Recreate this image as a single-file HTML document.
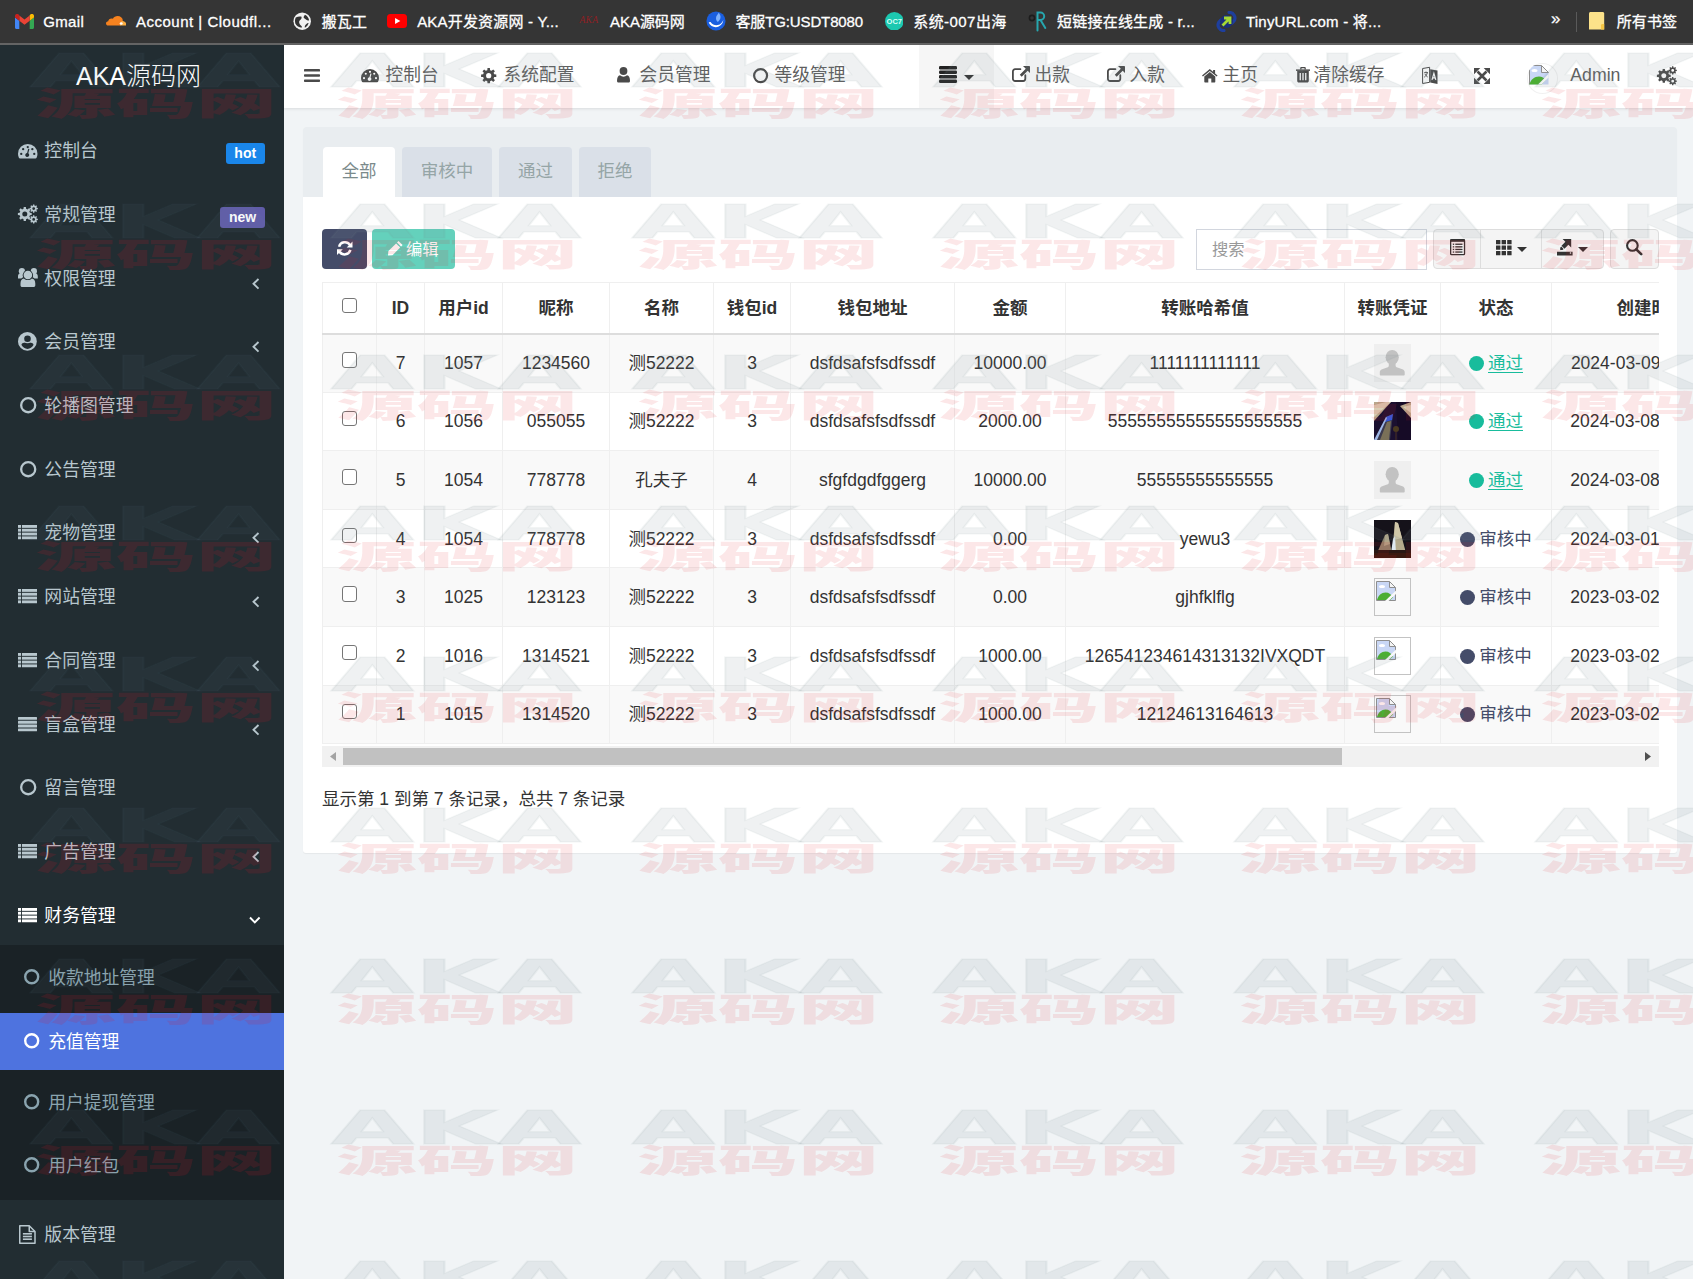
<!DOCTYPE html><html lang="zh-CN"><head><meta charset="utf-8"><title>AKA源码网</title>
<style>
*{box-sizing:border-box}
html,body{margin:0;padding:0}
body{width:1693px;height:1279px;overflow:hidden;position:relative;background:#f1f4f6;font-family:"Liberation Sans","Noto Sans CJK SC",sans-serif;font-size:17.5px;color:#333}
.abs{position:absolute}
#bm{left:0;top:0;width:1693px;height:45px;background:#353535;border-bottom:2px solid #646464;color:#f1f1f1;font-size:15px}
#bm .t{position:absolute;top:0;height:43px;line-height:43px;white-space:nowrap;color:#fff;-webkit-text-stroke:0.3px #fff}
#bm .i{position:absolute}
#side{left:0;top:45px;width:284px;height:1234px;background:#222d32;color:#b8c7ce}
#side .logo{position:absolute;left:0;top:0;width:277px;height:63px;line-height:62px;text-align:center;color:#fff;font-size:25px;font-weight:300}
#side .it{position:absolute;left:0;width:284px;height:64px}
#side .it .ic{position:absolute;left:18px}
#side .it .tx{position:absolute;left:44.3px;top:0;line-height:66px;white-space:nowrap;font-size:17.85px}
#side .badge{position:absolute;color:#fff;font-weight:bold;font-size:14px;line-height:20px;height:20.5px;border-radius:3px;text-align:center}
#sub{position:absolute;left:0;top:900px;width:284px;height:255px;background:#1a2226}
#sub .si{position:absolute;left:0;width:284px;height:57px;color:#8aa4af}
#sub .si .tx{position:absolute;left:48.2px;top:0;line-height:58px;white-space:nowrap;font-size:17.8px}
#sub .si.act{background:#4e73df;color:#fff}
#head{left:284px;top:45px;width:1409px;height:63px;background:#fff;box-shadow:0 1px 3px rgba(0,0,0,.10);color:#5f5f5f}
#head .t{position:absolute;top:0;line-height:60px;white-space:nowrap;font-size:17.7px}
#head .i{position:absolute}
#panel{left:303px;top:127px;width:1374px;height:726px;background:#fff;border-radius:3px;box-shadow:0 1px 1px rgba(0,0,0,.05)}
#phead{left:0;top:0;width:1374px;height:70px;background:#e9edf0;border-radius:3px 3px 0 0}
.tab{position:absolute;top:20px;height:50px;line-height:48px;text-align:center;color:#95a5a6;background:#dae0e8;border-radius:4px 4px 0 0;font-size:17.5px}
.tab.on{background:#fff;color:#7b8a8b}
.btn{position:absolute;border-radius:4px}
#tblwrap{left:19px;top:155px;width:1337px;height:464px;overflow:hidden}
table{border-collapse:collapse;table-layout:fixed;width:1429px;font-size:17.5px;color:#333}
th,td{line-height:20px;border:1px solid #efefef;text-align:center;vertical-align:middle;padding:0;white-space:nowrap;overflow:hidden}
th{height:51px;font-weight:bold;border-bottom:2px solid #ddd;color:#333;background:#fff}
td{height:58.62px}
tr.odd td{background:#f9f9f9}
.cb{display:inline-block;width:15.5px;height:15.5px;border:1.3px solid #767676;border-radius:3px;background:#fff;vertical-align:middle;position:relative;top:-4.5px}
.thumb{display:inline-block;width:37px;height:38px;vertical-align:middle;position:relative;overflow:hidden}
.dot{display:inline-block;width:15px;height:15px;border-radius:50%;vertical-align:middle;margin-right:4px;position:relative;top:-1px}
.ok{color:#18bc9c;text-decoration:underline;text-decoration-thickness:1px;text-underline-offset:2.5px}
.ok .dot{background:#18bc9c}
.wait{color:#444c69}
.wait .dot{background:#444c69}
</style></head><body>
<div id="bm" class="abs">
<div class="t" style="left:43.2px;letter-spacing:0.386px">Gmail</div>
<div class="t" style="left:136px;letter-spacing:0.499px">Account | Cloudfl...</div>
<div class="t" style="left:321.8px;letter-spacing:0.061px">搬瓦工</div>
<div class="t" style="left:417.2px;letter-spacing:0.179px">AKA开发资源网 - Y...</div>
<div class="t" style="left:610px;letter-spacing:-0.036px">AKA源码网</div>
<div class="t" style="left:735.5px;letter-spacing:-0.131px">客服TG:USDT8080</div>
<div class="t" style="left:913.2px;letter-spacing:0.446px">系统-007出海</div>
<div class="t" style="left:1057.1px;letter-spacing:0.206px">短链接在线生成 - r...</div>
<div class="t" style="left:1245.9px;letter-spacing:0.237px">TinyURL.com - 将...</div>
<div class="t" style="left:1616.8px;letter-spacing:0.046px">所有书签</div>
<svg class="i" style="left:15px;top:14px" width="19" height="15" viewBox="0 0 19 15"><path d="M0 2v11.500c0 .8.700 1.500 1.500 1.500H4.300V6.800L0 3.500z" fill="#4285f4"/><path d="M14.700 15h2.800c.8 0 1.500-.7 1.500-1.500V3.500l-4.300 3.300z" fill="#34a853"/><path d="M14.700 1.500v5.300L19 3.500V2c0-1.800-2-2.700-3.400-1.700z" fill="#fbbc04"/><path d="M4.300 6.800V1.500L9.500 5.400l5.200-3.900v5.300L9.500 10.700z" fill="#ea4335"/><path d="M0 2v1.500l4.300 3.300V1.500L3.400.3C2-.7 0 .2 0 2z" fill="#c5221f"/></svg>
<svg class="i" style="left:105.9px;top:15.8px" width="20.5" height="10" viewBox="0 0 22 12" preserveAspectRatio="none"><path d="M15.500 11.500H2.500C1 11.500 0 10.300 0 9c0-1.400 1-2.500 2.400-2.600C2.500 4.500 4 3 6 3c.5 0 1 .1 1.400.3C8.300 1.300 10.300 0 12.500 0c2.900 0 5.300 2.200 5.600 5l-2.600 6.500z" fill="#f6821f"/><path d="M17 6c.3 0 .6 0 .900.1 2.300.3 4.100 2.400 4.100 4.700 0 .3-.2.700-.5.700H15l1.200-3.500c.2-1 .5-2 .8-2z" fill="#fbad41"/><circle cx="16.300" cy="9" r="1.600" fill="#fff"/></svg>
<svg class="i" style="left:292.8px;top:11.8px" width="18.4" height="18.4" viewBox="0 0 20 20"><circle cx="10" cy="10" r="9.500" fill="#f1f1f1"/><path d="M3 6c2-1 4-1.500 6-1 1 1.500 0 3-1.500 4-1 1-1 2-0.500 3.500.500 1.500 2 2 3 4-3 1-6-1-7.500-4C2 10 2 8 3 6zM13 3c2 1 4 3 4.500 6-1 .5-2 .5-3-.5s-2-1-3-2.500c0-1 .5-2 1.500-3zM17 12c-.5 2-2 4-4 5-.5-1 0-2.500 1-3.500s2-1.500 3-1.500z" fill="#333"/></svg>
<svg class="i" style="left:387px;top:14.2px" width="20" height="14" viewBox="0 0 23 16" preserveAspectRatio="none"><rect width="23" height="16" rx="4" fill="#ff0000"/><path d="M9.300 4.500v7l6-3.500z" fill="#fff"/></svg>
<div class="i" style="left:579.5px;top:14px;width:22px;height:13px;font-family:Liberation Serif,serif;font-size:9.5px;line-height:13px;color:#8e1f24;font-style:italic;letter-spacing:0.3px">AKA</div>
<svg class="i" style="left:706px;top:11px" width="20" height="20" viewBox="0 0 22 22"><circle cx="11" cy="11" r="10.500" fill="#1a5fe0"/><path d="M3 13c2 4 7 6 11 4 3-1.500 5-4 5-7-1 3-3 5-6 5.500-3 .5-6-.5-8-3.500-1 0-2 .3-2 1z" fill="#fff"/><path d="M14 2c-1 2-3 3-3 6 0 2 1 3 2 4 1.500-1.500 3-3 3-5.500 0-1.500-1-3-2-4.500z" fill="#7fb2ff"/></svg>
<svg class="i" style="left:884.6px;top:11.6px" width="18.6" height="18.6" viewBox="0 0 21 21"><circle cx="10.500" cy="10.500" r="10.500" fill="#1cc8b0"/><text x="10.500" y="13.500" text-anchor="middle" font-family="Liberation Sans,sans-serif" font-size="8.500" font-weight="bold" fill="#d8fff8">OC7</text></svg>
<svg class="i" style="left:1028px;top:10px" width="20" height="24" viewBox="0 0 20 24"><path d="M9.500 20.500V2.500h3a3.700 3.700 0 0 1 0 7.400H9.500M12.500 10l4.800 8" fill="none" stroke="#27a6ad" stroke-width="2" stroke-linecap="round"/><circle cx="4" cy="8" r="2.600" fill="none" stroke="#1c1c1c" stroke-width="1.600"/></svg>
<svg class="i" style="left:1216px;top:11px" width="21" height="21" viewBox="0 0 21 21"><path d="M13 1.500a5.500 5.500 0 0 1 5 8.500l-2 2M8 19.500a5.500 5.500 0 0 1-5-8.500l2-2" fill="none" stroke="#1e3f9e" stroke-width="3.200" stroke-linecap="round"/><circle cx="10.500" cy="10.500" r="6.500" fill="#1b2f7a"/><path d="M6.500 14.500 13 8M8 7h6v6" fill="none" stroke="#a5d934" stroke-width="2.800"/></svg>
<div class="t" style="left:1551px;font-size:17px;line-height:38px">»</div>
<div class="i" style="left:1576px;top:12px;width:1px;height:20px;background:#5a5a5a"></div>
<svg class="i" style="left:1589.4px;top:12.300px" width="15.200" height="17.600" viewBox="0 0 15.200 17.600"><path d="M0 1.500C0 .7.700 0 1.500 0h12.200c.8 0 1.500.7 1.500 1.500v16.100H0z" fill="#fce28a"/><path d="M12 17.600v-4.300c0-.8.600-1.400 1.400-1.400h1.800v5.700z" fill="#f6c644"/></svg>
</div>
<div id="side" class="abs">
<div class="logo">AKA源码网</div>
<div class="it" style="top:73px;color:#b8c7ce"><div class="abs" style="left:17.8px;top:25.80px"><svg width="19.5" height="14.6" viewBox="0 0 19.5 14.6" style="display:block;overflow:visible;"><g transform="scale(1.0)"><path fill-rule="evenodd" fill="#b8c7ce" d="M9.75 0A9.75 9.75 0 0 0 0 9.75c0 1.400.300 2.700.900 3.900.200.500.600.850 1.100.850h15.500c.500 0 .900-.350 1.100-.850.600-1.200.900-2.500.900-3.900A9.750 9.750 0 0 0 9.750 0zM2.100 9.900a1.150 1.150 0 1 0 2.300 0a1.150 1.150 0 1 0-2.300 0z M4 5.200a1.150 1.150 0 1 0 2.300 0a1.150 1.150 0 1 0-2.300 0z M8.600 3.100a1.150 1.150 0 1 0 2.300 0a1.150 1.150 0 1 0-2.300 0z M13.200 5.200a1.150 1.150 0 1 0 2.300 0a1.150 1.150 0 1 0-2.300 0z M15.100 9.900a1.150 1.150 0 1 0 2.300 0a1.150 1.150 0 1 0-2.300 0zM11.400 5.100 10.300 9.300a2 2 0 1 1-1.200-.300l1.100-4.200z"/></g></svg></div><div class="tx">控制台</div>
<div class="badge" style="left:225.5px;top:25px;width:39.5px;background:#1a86ea">hot</div>
</div>
<div class="it" style="top:137px;color:#b8c7ce"><div class="abs" style="left:17.6px;top:23.40px"><svg width="20" height="18" viewBox="0 0 20 18" style="display:block;overflow:visible;"><path fill-rule="evenodd" d="M5.52 3.86 L5.70 2.09 L7.90 2.09 L8.08 3.86 L9.53 4.46 L10.91 3.34 L12.46 4.89 L11.34 6.27 L11.94 7.72 L13.71 7.90 L13.71 10.10 L11.94 10.28 L11.34 11.73 L12.46 13.11 L10.91 14.66 L9.53 13.54 L8.08 14.14 L7.90 15.91 L5.70 15.91 L5.52 14.14 L4.07 13.54 L2.69 14.66 L1.14 13.11 L2.26 11.73 L1.66 10.28 L-0.11 10.10 L-0.11 7.90 L1.66 7.72 L2.26 6.27 L1.14 4.89 L2.69 3.34 L4.07 4.46Z M4.30 9.00 a2.5 2.5 0 1 0 5.0 0 a2.5 2.5 0 1 0 -5.0 0Z M14.95 0.59 L15.04 -0.55 L16.36 -0.55 L16.45 0.59 L17.30 0.94 L18.17 0.20 L19.10 1.13 L18.36 2.00 L18.71 2.85 L19.85 2.94 L19.85 4.26 L18.71 4.35 L18.36 5.20 L19.10 6.07 L18.17 7.00 L17.30 6.26 L16.45 6.61 L16.36 7.75 L15.04 7.75 L14.95 6.61 L14.10 6.26 L13.23 7.00 L12.30 6.07 L13.04 5.20 L12.69 4.35 L11.55 4.26 L11.55 2.94 L12.69 2.85 L13.04 2.00 L12.30 1.13 L13.23 0.20 L14.10 0.94Z M14.30 3.60 a1.4 1.4 0 1 0 2.8 0 a1.4 1.4 0 1 0 -2.8 0Z M14.95 11.39 L15.04 10.25 L16.36 10.25 L16.45 11.39 L17.30 11.74 L18.17 11.00 L19.10 11.93 L18.36 12.80 L18.71 13.65 L19.85 13.74 L19.85 15.06 L18.71 15.15 L18.36 16.00 L19.10 16.87 L18.17 17.80 L17.30 17.06 L16.45 17.41 L16.36 18.55 L15.04 18.55 L14.95 17.41 L14.10 17.06 L13.23 17.80 L12.30 16.87 L13.04 16.00 L12.69 15.15 L11.55 15.06 L11.55 13.74 L12.69 13.65 L13.04 12.80 L12.30 11.93 L13.23 11.00 L14.10 11.74Z M14.30 14.40 a1.4 1.4 0 1 0 2.8 0 a1.4 1.4 0 1 0 -2.8 0Z" fill="#b8c7ce"/></svg></div><div class="tx">常规管理</div>
<div class="badge" style="left:220px;top:25px;width:45px;background:#605ca8">new</div>
</div>
<div class="it" style="top:201px;color:#b8c7ce"><div class="abs" style="left:17.8px;top:22.00px"><svg width="19.8" height="19" viewBox="0 0 19.8 19" style="display:block;overflow:visible;"><circle cx="3.900" cy="3.200" r="3.100" fill="#b8c7ce"/><circle cx="15.900" cy="3.200" r="3.100" fill="#b8c7ce"/><path d="M0 10.600V8.400c0-1.900 1-3 2.300-3.100.800.600 1.700.800 2.600.700-.300 1-.200 2.200.400 3.300-.800.300-1.500.800-2 1.300z" fill="#b8c7ce"/><path d="M19.800 10.600V8.400c0-1.900-1-3-2.300-3.100-.800.600-1.700.800-2.600.700.300 1 .200 2.200-.400 3.300.800.300 1.500.800 2 1.300z" fill="#b8c7ce"/><circle cx="9.900" cy="7" r="5.100" fill="#222d32"/><circle cx="9.900" cy="7" r="4.300" fill="#b8c7ce"/><path d="M4.400 19c-1.200 0-1.900-.700-1.900-1.800v-1.700c0-2.700 1.300-4.500 3.400-4.900 1.100 1 2.500 1.500 4 1.500s2.900-.500 4-1.500c2.100.400 3.400 2.200 3.400 4.900v1.700c0 1.100-.7 1.800-1.900 1.800z" fill="#b8c7ce"/></svg></div><div class="tx">权限管理</div>
<div class="abs" style="left:251.5px;top:31.7px"><svg width="8" height="11.6" viewBox="0 0 8 11.6" style="display:block;overflow:visible;"><path d="M6.500 1 1.500 5.800l5 4.800" fill="none" stroke="#b8c7ce" stroke-width="1.900"/></svg></div>
</div>
<div class="it" style="top:264px;color:#b8c7ce"><div class="abs" style="left:18px;top:23.00px"><svg width="18.8" height="18.8" viewBox="0 0 18.8 18.8" style="display:block;overflow:visible;"><circle cx="9.400" cy="9.400" r="9.400" fill="#b8c7ce"/><path d="M3.500 13.100c0-1.900 2.400-2.500 6-2.500s6 .600 6 2.500c-1.200 2.300-3.600 3.800-6 3.800s-4.800-1.500-6-3.800z" fill="#222d32"/><circle cx="9.500" cy="6.800" r="4.500" fill="#b8c7ce"/><circle cx="9.500" cy="6.800" r="3.300" fill="#222d32"/></svg></div><div class="tx">会员管理</div>
<div class="abs" style="left:251.5px;top:31.7px"><svg width="8" height="11.6" viewBox="0 0 8 11.6" style="display:block;overflow:visible;"><path d="M6.500 1 1.500 5.800l5 4.800" fill="none" stroke="#b8c7ce" stroke-width="1.900"/></svg></div>
</div>
<div class="it" style="top:328px;color:#b8c7ce"><div class="abs" style="left:19.5px;top:24.20px"><svg width="16.4" height="16.4" viewBox="0 0 16.4 16.4" style="display:block;overflow:visible;"><circle cx="8.2" cy="8.2" r="7.049999999999999" fill="none" stroke="#b8c7ce" stroke-width="2.3"/></svg></div><div class="tx">轮播图管理</div>
</div>
<div class="it" style="top:392px;color:#b8c7ce"><div class="abs" style="left:19.5px;top:24.20px"><svg width="16.4" height="16.4" viewBox="0 0 16.4 16.4" style="display:block;overflow:visible;"><circle cx="8.2" cy="8.2" r="7.049999999999999" fill="none" stroke="#b8c7ce" stroke-width="2.3"/></svg></div><div class="tx">公告管理</div>
</div>
<div class="it" style="top:455px;color:#b8c7ce"><div class="abs" style="left:18px;top:24.75px"><svg width="19" height="14.25" viewBox="0 0 19 14.25" style="display:block;overflow:visible;"><rect x="0" y="0" width="3" height="2.85" fill="#b8c7ce"/><rect x="3.900" y="0" width="15.100" height="2.85" fill="#b8c7ce"/><rect x="0" y="3.8" width="3" height="2.85" fill="#b8c7ce"/><rect x="3.900" y="3.8" width="15.100" height="2.85" fill="#b8c7ce"/><rect x="0" y="7.6" width="3" height="2.85" fill="#b8c7ce"/><rect x="3.900" y="7.6" width="15.100" height="2.85" fill="#b8c7ce"/><rect x="0" y="11.4" width="3" height="2.85" fill="#b8c7ce"/><rect x="3.900" y="11.4" width="15.100" height="2.85" fill="#b8c7ce"/></svg></div><div class="tx">宠物管理</div>
<div class="abs" style="left:251.5px;top:31.7px"><svg width="8" height="11.6" viewBox="0 0 8 11.6" style="display:block;overflow:visible;"><path d="M6.500 1 1.500 5.800l5 4.800" fill="none" stroke="#b8c7ce" stroke-width="1.900"/></svg></div>
</div>
<div class="it" style="top:519px;color:#b8c7ce"><div class="abs" style="left:18px;top:24.75px"><svg width="19" height="14.25" viewBox="0 0 19 14.25" style="display:block;overflow:visible;"><rect x="0" y="0" width="3" height="2.85" fill="#b8c7ce"/><rect x="3.900" y="0" width="15.100" height="2.85" fill="#b8c7ce"/><rect x="0" y="3.8" width="3" height="2.85" fill="#b8c7ce"/><rect x="3.900" y="3.8" width="15.100" height="2.85" fill="#b8c7ce"/><rect x="0" y="7.6" width="3" height="2.85" fill="#b8c7ce"/><rect x="3.900" y="7.6" width="15.100" height="2.85" fill="#b8c7ce"/><rect x="0" y="11.4" width="3" height="2.85" fill="#b8c7ce"/><rect x="3.900" y="11.4" width="15.100" height="2.85" fill="#b8c7ce"/></svg></div><div class="tx">网站管理</div>
<div class="abs" style="left:251.5px;top:31.7px"><svg width="8" height="11.6" viewBox="0 0 8 11.6" style="display:block;overflow:visible;"><path d="M6.500 1 1.500 5.800l5 4.800" fill="none" stroke="#b8c7ce" stroke-width="1.900"/></svg></div>
</div>
<div class="it" style="top:583px;color:#b8c7ce"><div class="abs" style="left:18px;top:24.75px"><svg width="19" height="14.25" viewBox="0 0 19 14.25" style="display:block;overflow:visible;"><rect x="0" y="0" width="3" height="2.85" fill="#b8c7ce"/><rect x="3.900" y="0" width="15.100" height="2.85" fill="#b8c7ce"/><rect x="0" y="3.8" width="3" height="2.85" fill="#b8c7ce"/><rect x="3.900" y="3.8" width="15.100" height="2.85" fill="#b8c7ce"/><rect x="0" y="7.6" width="3" height="2.85" fill="#b8c7ce"/><rect x="3.900" y="7.6" width="15.100" height="2.85" fill="#b8c7ce"/><rect x="0" y="11.4" width="3" height="2.85" fill="#b8c7ce"/><rect x="3.900" y="11.4" width="15.100" height="2.85" fill="#b8c7ce"/></svg></div><div class="tx">合同管理</div>
<div class="abs" style="left:251.5px;top:31.7px"><svg width="8" height="11.6" viewBox="0 0 8 11.6" style="display:block;overflow:visible;"><path d="M6.500 1 1.500 5.800l5 4.800" fill="none" stroke="#b8c7ce" stroke-width="1.900"/></svg></div>
</div>
<div class="it" style="top:647px;color:#b8c7ce"><div class="abs" style="left:18px;top:24.75px"><svg width="19" height="14.25" viewBox="0 0 19 14.25" style="display:block;overflow:visible;"><rect x="0" y="0" width="19" height="2.85" rx=".5" fill="#b8c7ce"/><rect x="0" y="3.8" width="19" height="2.85" rx=".5" fill="#b8c7ce"/><rect x="0" y="7.6" width="19" height="2.85" rx=".5" fill="#b8c7ce"/><rect x="0" y="11.4" width="19" height="2.85" rx=".5" fill="#b8c7ce"/></svg></div><div class="tx">盲盒管理</div>
<div class="abs" style="left:251.5px;top:31.7px"><svg width="8" height="11.6" viewBox="0 0 8 11.6" style="display:block;overflow:visible;"><path d="M6.500 1 1.500 5.800l5 4.800" fill="none" stroke="#b8c7ce" stroke-width="1.900"/></svg></div>
</div>
<div class="it" style="top:710px;color:#b8c7ce"><div class="abs" style="left:19.5px;top:24.20px"><svg width="16.4" height="16.4" viewBox="0 0 16.4 16.4" style="display:block;overflow:visible;"><circle cx="8.2" cy="8.2" r="7.049999999999999" fill="none" stroke="#b8c7ce" stroke-width="2.3"/></svg></div><div class="tx">留言管理</div>
</div>
<div class="it" style="top:774px;color:#b8c7ce"><div class="abs" style="left:18px;top:24.75px"><svg width="19" height="14.25" viewBox="0 0 19 14.25" style="display:block;overflow:visible;"><rect x="0" y="0" width="3" height="2.85" fill="#b8c7ce"/><rect x="3.900" y="0" width="15.100" height="2.85" fill="#b8c7ce"/><rect x="0" y="3.8" width="3" height="2.85" fill="#b8c7ce"/><rect x="3.900" y="3.8" width="15.100" height="2.85" fill="#b8c7ce"/><rect x="0" y="7.6" width="3" height="2.85" fill="#b8c7ce"/><rect x="3.900" y="7.6" width="15.100" height="2.85" fill="#b8c7ce"/><rect x="0" y="11.4" width="3" height="2.85" fill="#b8c7ce"/><rect x="3.900" y="11.4" width="15.100" height="2.85" fill="#b8c7ce"/></svg></div><div class="tx">广告管理</div>
<div class="abs" style="left:251.5px;top:31.7px"><svg width="8" height="11.6" viewBox="0 0 8 11.6" style="display:block;overflow:visible;"><path d="M6.500 1 1.500 5.800l5 4.800" fill="none" stroke="#b8c7ce" stroke-width="1.900"/></svg></div>
</div>
<div class="it" style="top:838px;color:#fff"><div class="abs" style="left:18px;top:24.75px"><svg width="19" height="14.25" viewBox="0 0 19 14.25" style="display:block;overflow:visible;"><rect x="0" y="0" width="3" height="2.85" fill="#fff"/><rect x="3.900" y="0" width="15.100" height="2.85" fill="#fff"/><rect x="0" y="3.8" width="3" height="2.85" fill="#fff"/><rect x="3.900" y="3.8" width="15.100" height="2.85" fill="#fff"/><rect x="0" y="7.6" width="3" height="2.85" fill="#fff"/><rect x="3.900" y="7.6" width="15.100" height="2.85" fill="#fff"/><rect x="0" y="11.4" width="3" height="2.85" fill="#fff"/><rect x="3.900" y="11.4" width="15.100" height="2.85" fill="#fff"/></svg></div><div class="tx">财务管理</div>
<div class="abs" style="left:248.5px;top:33px"><svg width="11.6" height="8" viewBox="0 0 11.6 8" style="display:block;overflow:visible;"><path d="M1 1.500 5.800 6.500l4.800-5" fill="none" stroke="#fff" stroke-width="1.900"/></svg></div>
</div>
<div class="it" style="top:1157px;color:#b8c7ce"><div class="abs" style="left:19.25px;top:23.00px"><svg width="16.75" height="19" viewBox="0 0 16.75 19" style="display:block;overflow:visible;"><path d="M.75.750h9.500l5.750 5.750v11.750H.75z" fill="none" stroke="#b8c7ce" stroke-width="1.500" stroke-linejoin="round"/><path d="M10.250.750v5.750h5.750" fill="none" stroke="#b8c7ce" stroke-width="1.500" stroke-linejoin="round"/><rect x="3.900" y="8" width="9" height="1.600" fill="#b8c7ce"/><rect x="3.900" y="10.700" width="9" height="1.600" fill="#b8c7ce"/><rect x="3.900" y="13.400" width="9" height="1.600" fill="#b8c7ce"/></svg></div><div class="tx">版本管理</div>
</div>
<div id="sub">
<div class="si" style="top:3.5px"><div class="abs" style="left:23.6px;top:20.8px"><svg width="15.4" height="15.4" viewBox="0 0 15.4 15.4" style="display:block;overflow:visible;"><circle cx="7.7" cy="7.7" r="6.5" fill="none" stroke="#8aa4af" stroke-width="2.4"/></svg></div><div class="tx">收款地址管理</div></div>
<div class="si act" style="top:67.5px"><div class="abs" style="left:23.6px;top:20.8px"><svg width="15.4" height="15.4" viewBox="0 0 15.4 15.4" style="display:block;overflow:visible;"><circle cx="7.7" cy="7.7" r="6.5" fill="none" stroke="#fff" stroke-width="2.4"/></svg></div><div class="tx">充值管理</div></div>
<div class="si" style="top:128.5px"><div class="abs" style="left:23.6px;top:20.8px"><svg width="15.4" height="15.4" viewBox="0 0 15.4 15.4" style="display:block;overflow:visible;"><circle cx="7.7" cy="7.7" r="6.5" fill="none" stroke="#8aa4af" stroke-width="2.4"/></svg></div><div class="tx">用户提现管理</div></div>
<div class="si" style="top:191.5px"><div class="abs" style="left:23.6px;top:20.8px"><svg width="15.4" height="15.4" viewBox="0 0 15.4 15.4" style="display:block;overflow:visible;"><circle cx="7.7" cy="7.7" r="6.5" fill="none" stroke="#8aa4af" stroke-width="2.4"/></svg></div><div class="tx">用户红包</div></div>
</div>
</div>
<div id="head" class="abs">
<div class="abs" style="left:635px;top:0;width:75px;height:63px;background:#f6f6f6"></div>
<div class="i" style="left:20.00px;top:24.00px"><svg width="16" height="13" viewBox="0 0 16 13" style="display:block;overflow:visible;"><rect x="0" y="0.00" width="16" height="2.60" rx=".7" fill="#4a4a4a"/><rect x="0" y="5.20" width="16" height="2.60" rx=".7" fill="#4a4a4a"/><rect x="0" y="10.40" width="16" height="2.60" rx=".7" fill="#4a4a4a"/></svg></div>
<div class="i" style="left:77.00px;top:24.30px"><svg width="18" height="13.48" viewBox="0 0 18 13.48" style="display:block;overflow:visible;"><g transform="scale(0.9230769230769231)"><path fill-rule="evenodd" fill="#4a4a4a" d="M9.75 0A9.75 9.75 0 0 0 0 9.75c0 1.400.300 2.700.900 3.900.200.500.600.850 1.100.850h15.500c.500 0 .900-.350 1.100-.850.600-1.200.900-2.500.900-3.900A9.750 9.750 0 0 0 9.750 0zM2.100 9.900a1.150 1.150 0 1 0 2.300 0a1.150 1.150 0 1 0-2.300 0z M4 5.200a1.150 1.150 0 1 0 2.300 0a1.150 1.150 0 1 0-2.300 0z M8.600 3.100a1.150 1.150 0 1 0 2.300 0a1.150 1.150 0 1 0-2.300 0z M13.200 5.200a1.150 1.150 0 1 0 2.300 0a1.150 1.150 0 1 0-2.300 0z M15.100 9.900a1.150 1.150 0 1 0 2.300 0a1.150 1.150 0 1 0-2.300 0zM11.400 5.100 10.300 9.300a2 2 0 1 1-1.200-.300l1.100-4.200z"/></g></svg></div>
<div class="t" style="left:101.60px">控制台</div>
<div class="i" style="left:196.80px;top:22.80px"><svg width="15.4" height="15.4" viewBox="0 0 15.4 15.4" style="display:block;overflow:visible;"><path fill-rule="evenodd" d="M6.32 2.17 L6.50 0.09 L8.90 0.09 L9.08 2.17 L10.63 2.82 L12.23 1.47 L13.93 3.17 L12.58 4.77 L13.23 6.32 L15.31 6.50 L15.31 8.90 L13.23 9.08 L12.58 10.63 L13.93 12.23 L12.23 13.93 L10.63 12.58 L9.08 13.23 L8.90 15.31 L6.50 15.31 L6.32 13.23 L4.77 12.58 L3.17 13.93 L1.47 12.23 L2.82 10.63 L2.17 9.08 L0.09 8.90 L0.09 6.50 L2.17 6.32 L2.82 4.77 L1.47 3.17 L3.17 1.47 L4.77 2.82Z M5.08 7.70 a2.6180000000000003 2.6180000000000003 0 1 0 5.236000000000001 0 a2.6180000000000003 2.6180000000000003 0 1 0 -5.236000000000001 0Z" fill="#4a4a4a"/></svg></div>
<div class="t" style="left:219.60px">系统配置</div>
<div class="i" style="left:333.30px;top:22.30px"><svg width="13" height="15.5" viewBox="0 0 13 15.5" style="display:block;overflow:visible;"><circle cx="6.500" cy="4" r="3.900" fill="#4a4a4a"/><path d="M1.500 15.500C.5 15.500 0 14.900 0 14c0-3 1-5.400 3-5.700 1 .900 2.200 1.400 3.500 1.400s2.500-.500 3.500-1.400c2 .300 3 2.700 3 5.700 0 .900-.5 1.500-1.500 1.500z" fill="#4a4a4a"/></svg></div>
<div class="t" style="left:355.60px">会员管理</div>
<div class="i" style="left:468.50px;top:23.20px"><svg width="15.2" height="15.2" viewBox="0 0 15.2 15.2" style="display:block;overflow:visible;"><circle cx="7.6" cy="7.6" r="6.5" fill="none" stroke="#4a4a4a" stroke-width="2.2"/></svg></div>
<div class="t" style="left:490.60px">等级管理</div>
<div class="i" style="left:655.00px;top:21.00px"><svg width="18" height="17" viewBox="0 0 18 17" style="display:block;overflow:visible;"><rect x="0" y="0.00" width="18" height="3.5" rx="1.2" fill="#222"/><rect x="0" y="4.50" width="18" height="3.5" rx="1.2" fill="#222"/><rect x="0" y="9.00" width="18" height="3.5" rx="1.2" fill="#222"/><rect x="0" y="13.50" width="18" height="3.5" rx="1.2" fill="#222"/></svg></div>
<div class="i" style="left:680.00px;top:29.75px"><svg width="10" height="5" viewBox="0 0 10 5" style="display:block;overflow:visible;"><path d="M0 0h10L5 5z" fill="#333"/></svg></div>
<div class="i" style="left:728.00px;top:21.30px"><svg width="18" height="15.9" viewBox="0 0 18 15.9" style="display:block;overflow:visible;"><path d="M13.300 9.200v3.600a2.200 2.200 0 0 1-2.200 2.200H3.100a2.200 2.200 0 0 1-2.200-2.200V5.400a2.200 2.200 0 0 1 2.200-2.200h5.300" fill="none" stroke="#4a4a4a" stroke-width="1.800" stroke-linecap="round"/><path d="M11 0h6.300c.4 0 .7.300.7.700V7l-2.300-2.300-6 6-1.900-1.900 6-6z" fill="#4a4a4a"/></svg></div>
<div class="t" style="left:750.60px">出款</div>
<div class="i" style="left:823.00px;top:21.30px"><svg width="18" height="15.9" viewBox="0 0 18 15.9" style="display:block;overflow:visible;"><path d="M13.300 9.200v3.600a2.200 2.200 0 0 1-2.200 2.200H3.100a2.200 2.200 0 0 1-2.200-2.200V5.400a2.200 2.200 0 0 1 2.200-2.200h5.300" fill="none" stroke="#4a4a4a" stroke-width="1.800" stroke-linecap="round"/><path d="M11 0h6.300c.4 0 .7.300.7.700V7l-2.300-2.300-6 6-1.900-1.900 6-6z" fill="#4a4a4a"/></svg></div>
<div class="t" style="left:845.60px">入款</div>
<div class="i" style="left:918.30px;top:23.60px"><svg width="15.6" height="13.4" viewBox="0 0 15.6 13.4" style="display:block;overflow:visible;"><path d="M7.800 0 0 6.500l.9 1.100L7.800 1.900l6.900 5.700.9-1.100-2.500-2.100V.9h-2v1.900z" fill="#4a4a4a"/><path d="M7.800 3 2.300 7.600v5.100c0 .4.300.7.700.7h3.300V9.500h3v3.900h3.300c.4 0 .7-.3.700-.7V7.600z" fill="#4a4a4a"/></svg></div>
<div class="t" style="left:938.60px">主页</div>
<div class="i" style="left:1011.50px;top:22.30px"><svg width="14" height="15.6" viewBox="0 0 14 15.6" style="display:block;overflow:visible;"><path d="M0 2.400h14v1.500H0z" fill="#4a4a4a"/><path d="M4.200 2.600V1.200C4.200.5 4.700 0 5.400 0h3.200c.7 0 1.200.5 1.200 1.200v1.400H8.500V1.300h-3v1.300z" fill="#4a4a4a"/><path fill-rule="evenodd" d="M1.200 3.900h11.600v9.900c0 1-.7 1.800-1.600 1.800H2.800c-.9 0-1.600-.8-1.600-1.800zM3.600 6v7.200h1.300V6zM6.350 6v7.200h1.300V6zM9.100 6v7.200h1.300V6z" fill="#4a4a4a"/></svg></div>
<div class="t" style="left:1029.60px">清除缓存</div>
<div class="i" style="left:1137.70px;top:21.70px"><svg width="16" height="17.5" viewBox="0 0 16 17.5" style="display:block;overflow:visible;"><path d="M.6 1.500 7.600.3v15L.6 16.500z" fill="#fff" stroke="#4a4a4a" stroke-width="1"/><path d="M8.200 2.200 15.500 3.400v13.500L8.200 15.600z" fill="#4a4a4a"/><path d="M10 12.800 11.900 6.300l1.900 6.500M10.600 10.900h2.600" fill="none" stroke="#fff" stroke-width="1.200"/><path d="M2.200 5.600h3.800M4 4.500v1.100M5.300 5.700c-.4 2-1.500 3.500-3.100 4.500M2.900 6.800c.5 1.400 1.500 2.500 2.800 3.200" fill="none" stroke="#4a4a4a" stroke-width=".9"/></svg></div>
<div class="i" style="left:1190.40px;top:22.60px"><svg width="16" height="16" viewBox="0 0 16 16" style="display:block;overflow:visible;"><path d="M3.500 3.500 12.500 12.500M12.500 3.500 3.500 12.500" stroke="#4a4a4a" stroke-width="2.600" fill="none"/><path d="M0 0h6.300L0 6.300zM16 0v6.300L9.700 0zM0 16V9.700L6.300 16zM16 16H9.700L16 9.700z" fill="#4a4a4a"/></svg></div>
<div class="i" style="left:1243px;top:18px;width:31px;height:31px;border-radius:50%;overflow:hidden;box-shadow:inset 0 0 0 1px rgba(0,0,0,.06)"><svg width="20" height="20" viewBox="0 0 20 20" style="position:absolute;left:2px;top:2px"><path d="M.5.500h12l7 7v12H.5z" fill="#c9d7f5"/><path d="M12.500.500v7h7z" fill="#f4f4f4" stroke="#8e8e8e" stroke-width="1"/><path d="M.5 19.500V.5h12" fill="none" stroke="#8e8e8e" stroke-width="1"/><ellipse cx="5.500" cy="5.500" rx="3" ry="1.600" fill="#fff"/><path d="M.5 19.500c1-5 5-8 9.500-8 3 0 5 1.500 6.500 3.500l-4 4.500z" fill="#4cae34"/><path d="M19.500 9 9 19.500h3.500l7-7z" fill="#fff"/></svg></div>
<div class="t" style="left:1286.30px">Admin</div>
<div class="i" style="left:1373.40px;top:21.70px"><svg width="19.6" height="17.6" viewBox="0 0 19.6 17.6" style="display:block;overflow:visible;"><path fill-rule="evenodd" d="M5.52 3.66 L5.70 1.89 L7.90 1.89 L8.08 3.66 L9.53 4.26 L10.91 3.14 L12.46 4.69 L11.34 6.07 L11.94 7.52 L13.71 7.70 L13.71 9.90 L11.94 10.08 L11.34 11.53 L12.46 12.91 L10.91 14.46 L9.53 13.34 L8.08 13.94 L7.90 15.71 L5.70 15.71 L5.52 13.94 L4.07 13.34 L2.69 14.46 L1.14 12.91 L2.26 11.53 L1.66 10.08 L-0.11 9.90 L-0.11 7.70 L1.66 7.52 L2.26 6.07 L1.14 4.69 L2.69 3.14 L4.07 4.26Z M4.30 8.80 a2.5 2.5 0 1 0 5.0 0 a2.5 2.5 0 1 0 -5.0 0Z M14.95 0.39 L15.04 -0.75 L16.36 -0.75 L16.45 0.39 L17.30 0.74 L18.17 0.00 L19.10 0.93 L18.36 1.80 L18.71 2.65 L19.85 2.74 L19.85 4.06 L18.71 4.15 L18.36 5.00 L19.10 5.87 L18.17 6.80 L17.30 6.06 L16.45 6.41 L16.36 7.55 L15.04 7.55 L14.95 6.41 L14.10 6.06 L13.23 6.80 L12.30 5.87 L13.04 5.00 L12.69 4.15 L11.55 4.06 L11.55 2.74 L12.69 2.65 L13.04 1.80 L12.30 0.93 L13.23 0.00 L14.10 0.74Z M14.30 3.40 a1.4 1.4 0 1 0 2.8 0 a1.4 1.4 0 1 0 -2.8 0Z M14.95 11.19 L15.04 10.05 L16.36 10.05 L16.45 11.19 L17.30 11.54 L18.17 10.80 L19.10 11.73 L18.36 12.60 L18.71 13.45 L19.85 13.54 L19.85 14.86 L18.71 14.95 L18.36 15.80 L19.10 16.67 L18.17 17.60 L17.30 16.86 L16.45 17.21 L16.36 18.35 L15.04 18.35 L14.95 17.21 L14.10 16.86 L13.23 17.60 L12.30 16.67 L13.04 15.80 L12.69 14.95 L11.55 14.86 L11.55 13.54 L12.69 13.45 L13.04 12.60 L12.30 11.73 L13.23 10.80 L14.10 11.54Z M14.30 14.20 a1.4 1.4 0 1 0 2.8 0 a1.4 1.4 0 1 0 -2.8 0Z" fill="#4a4a4a"/></svg></div>
</div>
<div id="panel" class="abs"><div id="phead" class="abs">
<div class="tab on" style="left:20px;width:72px">全部</div>
<div class="tab" style="left:99px;width:90px">审核中</div>
<div class="tab" style="left:196px;width:73px">通过</div>
<div class="tab" style="left:276px;width:72px">拒绝</div>
</div>
<div class="btn" style="left:19px;top:102px;width:45px;height:40px;background:#444c69"></div>
<div class="abs" style="left:33.80px;top:114.00px"><svg width="15.5" height="14.6" viewBox="0 0 15.5 14.6" style="display:block;overflow:visible;"><g transform="translate(15.5 0) scale(-1 1)"><path d="M13.400 5.700A6 6 0 0 0 2.600 3.900" fill="none" stroke="#fff" stroke-width="2.500"/><path d="M0 .600v5.800h5.800z" fill="#fff"/><path d="M2.100 8.900a6 6 0 0 0 10.800 1.800" fill="none" stroke="#fff" stroke-width="2.500"/><path d="M15.500 14V8.200H9.700z" fill="#fff"/></g></svg></div>
<div class="btn" style="left:69px;top:102px;width:83px;height:40px;background:#64d1bc;color:#fff;font-size:16.250px;line-height:40px"><span class="abs" style="left:34px;top:0">编辑</span></div>
<div class="abs" style="left:84.80px;top:114.00px"><svg width="14.6" height="14.6" viewBox="0 0 14.6 14.6" style="display:block;overflow:visible;"><path d="M10.500 0 14.600 4.100 13.100 5.600 9 1.500z" fill="#fff"/><path d="M8.100 2.400 12.200 6.500 4.500 14.200 0 14.600 .4 10.100z" fill="#fff"/></svg></div>
<div class="abs" style="left:893px;top:102px;width:231px;height:41px;border:1px solid #d2d6de;background:#fff;font-size:16.250px;color:#999;line-height:39px;padding-left:15px">搜索</div>
<div class="abs" style="left:1130px;top:102px;width:171px;height:39.500px;border:1px solid #ddd;background:#f4f4f4;border-radius:4px"></div>
<div class="abs" style="left:1177px;top:102px;width:1px;height:39px;background:#ddd"></div><div class="abs" style="left:1238px;top:102px;width:1px;height:39px;background:#ddd"></div>
<div class="abs" style="left:1307px;top:102px;width:48.500px;height:39.500px;border:1px solid #ddd;background:#f4f4f4;border-radius:4px"></div>
<div class="abs" style="left:1146.80px;top:111.75px"><svg width="15.2" height="16.3" viewBox="0 0 15.2 16.3" style="display:block;overflow:visible;"><rect x=".65" y=".65" width="13.900" height="15" rx="1" fill="none" stroke="#333" stroke-width="1.300"/><rect x=".3" y=".3" width="14.600" height="2.500" fill="#333"/><rect x="2.800" y="4.6" width="1.400" height="1.300" fill="#333"/><rect x="5.300" y="4.6" width="7.200" height="1.300" fill="#333"/><rect x="2.800" y="7.2" width="1.400" height="1.300" fill="#333"/><rect x="5.300" y="7.2" width="7.200" height="1.300" fill="#333"/><rect x="2.800" y="9.8" width="1.400" height="1.300" fill="#333"/><rect x="5.300" y="9.8" width="7.200" height="1.300" fill="#333"/><rect x="2.800" y="12.4" width="1.400" height="1.300" fill="#333"/><rect x="5.300" y="12.4" width="7.200" height="1.300" fill="#333"/></svg></div>
<div class="abs" style="left:1192.50px;top:112.90px"><svg width="15.6" height="15.2" viewBox="0 0 15.6 15.2" style="display:block;overflow:visible;"><rect x="0" y="0" width="4.400" height="4.200" rx=".3" fill="#333"/><rect x="0" y="5.5" width="4.400" height="4.200" rx=".3" fill="#333"/><rect x="0" y="11" width="4.400" height="4.200" rx=".3" fill="#333"/><rect x="5.6" y="0" width="4.400" height="4.200" rx=".3" fill="#333"/><rect x="5.6" y="5.5" width="4.400" height="4.200" rx=".3" fill="#333"/><rect x="5.6" y="11" width="4.400" height="4.200" rx=".3" fill="#333"/><rect x="11.2" y="0" width="4.400" height="4.200" rx=".3" fill="#333"/><rect x="11.2" y="5.5" width="4.400" height="4.200" rx=".3" fill="#333"/><rect x="11.2" y="11" width="4.400" height="4.200" rx=".3" fill="#333"/></svg></div>
<div class="abs" style="left:1213.50px;top:120.00px"><svg width="10" height="5" viewBox="0 0 10 5" style="display:block;overflow:visible;"><path d="M0 0h10L5 5z" fill="#333"/></svg></div>
<div class="abs" style="left:1253.90px;top:111.50px"><svg width="15.6" height="16.5" viewBox="0 0 15.6 16.5" style="display:block;overflow:visible;"><path fill-rule="evenodd" d="M0 12.700h15.600v3.800H0zM12.700 14a.8.800 0 1 0 1.600 0a.8.800 0 1 0-1.600 0z" fill="#333"/><path d="M5.600 0h8.600v8.600L11.400 5.800 7.500 9.700 4.500 6.700 8.400 2.800z" fill="#333"/><path d="M4.300 7.600 6.600 9.900 5.500 11H3.200V8.700z" fill="#333"/></svg></div>
<div class="abs" style="left:1275.00px;top:120.00px"><svg width="10" height="5" viewBox="0 0 10 5" style="display:block;overflow:visible;"><path d="M0 0h10L5 5z" fill="#333"/></svg></div>
<div class="abs" style="left:1323.30px;top:111.75px"><svg width="16.3" height="16.3" viewBox="0 0 16.3 16.3" style="display:block;overflow:visible;"><circle cx="6.400" cy="6.400" r="5.300" fill="none" stroke="#333" stroke-width="2.100"/><path d="M10.300 10.300 15.200 15.200" stroke="#333" stroke-width="2.600" stroke-linecap="round"/></svg></div>
<div id="tblwrap" class="abs"><table><colgroup><col style="width:54px"><col style="width:48px"><col style="width:78px"><col style="width:107px"><col style="width:104px"><col style="width:77px"><col style="width:164px"><col style="width:111px"><col style="width:279px"><col style="width:96px"><col style="width:111px"><col style="width:200px"></colgroup>
<thead><tr><th><span class=cb style=top:-3.5px></span></th><th>ID</th><th>用户id</th><th>昵称</th><th>名称</th><th>钱包id</th><th>钱包地址</th><th>金额</th><th>转账哈希值</th><th>转账凭证</th><th>状态</th><th>创建时间</th></tr></thead><tbody>
<tr class="odd"><td><span class="cb"></span></td><td>7</td><td>1057</td><td>1234560</td><td>测52222</td><td>3</td><td>dsfdsafsfsdfssdf</td><td>10000.00</td><td>1111111111111</td><td><span class="thumb" style="background:#efefef"><svg width="37" height="38" viewBox="0 0 37 38" style="position:absolute;left:0;top:0"><ellipse cx="18.200" cy="13.300" rx="6.600" ry="7.400" fill="#c2c2c2"/><path d="M14.800 18h6.800v3.500c0 1 .6 1.600 1.800 2l5 1.700c1.500.5 2.300 1.600 2.300 3v2.200c0 .6-.4 1-1 1H6.800c-.6 0-1-.4-1-1v-2.200c0-1.400.8-2.500 2.300-3l5-1.700c1.200-.4 1.700-1 1.700-2z" fill="#c2c2c2"/></svg></span></td><td><span class="ok"><span class="dot"></span>通过</span></td><td>2024-03-09 17:05:11</td></tr>
<tr class="even"><td><span class="cb"></span></td><td>6</td><td>1056</td><td>055055</td><td>测52222</td><td>3</td><td>dsfdsafsfsdfssdf</td><td>2000.00</td><td>55555555555555555555</td><td><span class="thumb" style="background:#1b1030"><svg width="37" height="38" viewBox="0 0 37 38" style="position:absolute;left:0;top:0"><path d="M0 0h17L0 19z" fill="#b9a78c"/><path d="M0 3 12 0h5L0 15z" fill="#d9cdb4"/><path d="M22 0h15v38H24z" fill="#160b26"/><path d="M26 4 37 0v16z" fill="#b9a78c"/><path d="M29 5 37 3v8z" fill="#d9cdb4"/><path d="M0 38 12 15l7-3-3 26z" fill="#3c3a4e"/><path d="M12 15l7-3-1 6-7 2z" fill="#2f5be0"/><path d="M0 38 12 15l1 1L3 38z" fill="#9fb8e8"/><path d="M6 38 13 20l4-1-2 19z" fill="#7a7058"/><circle cx="22" cy="27" r="3" fill="#4a3a20"/><path d="M21.500 29h1v9h-1z" fill="#4a3020"/></svg></span></td><td><span class="ok"><span class="dot"></span>通过</span></td><td>2024-03-08 21:42:36</td></tr>
<tr class="odd"><td><span class="cb"></span></td><td>5</td><td>1054</td><td>778778</td><td>孔夫子</td><td>4</td><td>sfgfdgdfggerg</td><td>10000.00</td><td>55555555555555</td><td><span class="thumb" style="background:#efefef"><svg width="37" height="38" viewBox="0 0 37 38" style="position:absolute;left:0;top:0"><ellipse cx="18.200" cy="13.300" rx="6.600" ry="7.400" fill="#c2c2c2"/><path d="M14.800 18h6.800v3.500c0 1 .6 1.600 1.800 2l5 1.700c1.500.5 2.300 1.600 2.300 3v2.200c0 .6-.4 1-1 1H6.800c-.6 0-1-.4-1-1v-2.200c0-1.400.8-2.500 2.300-3l5-1.700c1.200-.4 1.700-1 1.700-2z" fill="#c2c2c2"/></svg></span></td><td><span class="ok"><span class="dot"></span>通过</span></td><td>2024-03-08 20:18:54</td></tr>
<tr class="even"><td><span class="cb"></span></td><td>4</td><td>1054</td><td>778778</td><td>测52222</td><td>3</td><td>dsfdsafsfsdfssdf</td><td>0.00</td><td>yewu3</td><td><span class="thumb" style="background:#15121a"><svg width="37" height="38" viewBox="0 0 37 38" style="position:absolute;left:0;top:0"><path d="M18 33 21 2l3 1 8 30z" fill="#b5aa8c"/><path d="M21 2l3 1 4 15-8 2z" fill="#cfc6a8"/><path d="M17 33l2-14 2-3 1 17z" fill="#dfe8f0"/><path d="M3 33 11 15l3-1 4 19z" fill="#8d836c"/><path d="M11 15l3-1 2 10-6 2z" fill="#b0a588"/><path d="M0 32h37v6H0z" fill="#3a1a10"/><path d="M0 30h37v3H0z" fill="#2a1814"/></svg></span></td><td><span class="wait"><span class="dot"></span>审核中</span></td><td>2024-03-01 15:33:02</td></tr>
<tr class="odd"><td><span class="cb"></span></td><td>3</td><td>1025</td><td>123123</td><td>测52222</td><td>3</td><td>dsfdsafsfsdfssdf</td><td>0.00</td><td>gjhfklflg</td><td><span class="thumb" style="border:1px solid #c3c3c3"><svg width="20" height="20" viewBox="0 0 20 20" style="position:absolute;left:1px;top:2px"><path d="M.5.500h13l6 6v13H.5z" fill="#c9d7f5"/><path d="M13.500.500v6h6z" fill="#f4f4f4" stroke="#8e8e8e" stroke-width="1"/><path d="M.5 19.500V.5h13M19.500 6.500v13H.5" fill="none" stroke="#8e8e8e" stroke-width="1"/><ellipse cx="6" cy="5.500" rx="3" ry="1.600" fill="#fff"/><path d="M1 19c1-4.500 4.500-7.500 8.500-7.500 3.500 0 6 2 7.500 5l-3 2.500z" fill="#4cae34"/><path d="M20 9.500 9 20h3.500l7.500-7z" fill="#f9f9f9"/></svg></span></td><td><span class="wait"><span class="dot"></span>审核中</span></td><td>2023-03-02 19:27:45</td></tr>
<tr class="even"><td><span class="cb"></span></td><td>2</td><td>1016</td><td>1314521</td><td>测52222</td><td>3</td><td>dsfdsafsfsdfssdf</td><td>1000.00</td><td>126541234614313132IVXQDT</td><td><span class="thumb" style="border:1px solid #c3c3c3"><svg width="20" height="20" viewBox="0 0 20 20" style="position:absolute;left:1px;top:2px"><path d="M.5.500h13l6 6v13H.5z" fill="#c9d7f5"/><path d="M13.500.500v6h6z" fill="#f4f4f4" stroke="#8e8e8e" stroke-width="1"/><path d="M.5 19.500V.5h13M19.500 6.500v13H.5" fill="none" stroke="#8e8e8e" stroke-width="1"/><ellipse cx="6" cy="5.500" rx="3" ry="1.600" fill="#fff"/><path d="M1 19c1-4.500 4.500-7.500 8.500-7.500 3.500 0 6 2 7.500 5l-3 2.500z" fill="#4cae34"/><path d="M20 9.500 9 20h3.500l7.500-7z" fill="#f9f9f9"/></svg></span></td><td><span class="wait"><span class="dot"></span>审核中</span></td><td>2023-03-02 19:21:08</td></tr>
<tr class="odd"><td><span class="cb"></span></td><td>1</td><td>1015</td><td>1314520</td><td>测52222</td><td>3</td><td>dsfdsafsfsdfssdf</td><td>1000.00</td><td>12124613164613</td><td><span class="thumb" style="border:1px solid #c3c3c3"><svg width="20" height="20" viewBox="0 0 20 20" style="position:absolute;left:1px;top:2px"><path d="M.5.500h13l6 6v13H.5z" fill="#c9d7f5"/><path d="M13.500.500v6h6z" fill="#f4f4f4" stroke="#8e8e8e" stroke-width="1"/><path d="M.5 19.500V.5h13M19.500 6.500v13H.5" fill="none" stroke="#8e8e8e" stroke-width="1"/><ellipse cx="6" cy="5.500" rx="3" ry="1.600" fill="#fff"/><path d="M1 19c1-4.500 4.500-7.500 8.500-7.500 3.500 0 6 2 7.500 5l-3 2.500z" fill="#4cae34"/><path d="M20 9.500 9 20h3.500l7.500-7z" fill="#f9f9f9"/></svg></span></td><td><span class="wait"><span class="dot"></span>审核中</span></td><td>2023-03-02 19:16:30</td></tr>
</tbody></table>
</div>
<div class="abs" style="left:19px;top:619px;width:1337px;height:21px;background:#f1f1f1"></div>
<div class="abs" style="left:40px;top:621px;width:999px;height:17px;background:#c1c1c1"></div>
<svg class="abs" style="left:27px;top:625px" width="6" height="9" viewBox="0 0 6 9"><path d="M6 0v9L0 4.500z" fill="#a3a3a3"/></svg>
<svg class="abs" style="left:1342px;top:625px" width="6" height="9" viewBox="0 0 6 9"><path d="M0 0v9l6-4.500z" fill="#505050"/></svg>
<div class="abs" style="left:19px;top:658px;line-height:28px;white-space:nowrap;color:#333">显示第 1 到第 7 条记录，总共 7 条记录</div>
</div>
<svg class="abs" style="left:0px;top:45px;pointer-events:none" width="284" height="1234" viewBox="0 45 284 1234"><g font-family="DejaVu Sans,sans-serif" font-weight="bold" font-size="46.5" fill="#6f8fa0" fill-opacity="0.07" stroke="#6f8fa0" stroke-opacity="0.049" stroke-width="1"><text x="29.5" y="87" textLength="251" lengthAdjust="spacingAndGlyphs">AKA</text><text x="29.5" y="238" textLength="251" lengthAdjust="spacingAndGlyphs">AKA</text><text x="29.5" y="389" textLength="251" lengthAdjust="spacingAndGlyphs">AKA</text><text x="29.5" y="540" textLength="251" lengthAdjust="spacingAndGlyphs">AKA</text><text x="29.5" y="691" textLength="251" lengthAdjust="spacingAndGlyphs">AKA</text><text x="29.5" y="842" textLength="251" lengthAdjust="spacingAndGlyphs">AKA</text><text x="29.5" y="993" textLength="251" lengthAdjust="spacingAndGlyphs">AKA</text><text x="29.5" y="1144" textLength="251" lengthAdjust="spacingAndGlyphs">AKA</text><text x="29.5" y="1295" textLength="251" lengthAdjust="spacingAndGlyphs">AKA</text></g><g font-family="Noto Sans CJK SC,sans-serif" font-weight="900" font-size="32" fill="#e01828" fill-opacity="0.14"><text x="35" y="115" textLength="242" lengthAdjust="spacingAndGlyphs">源码网</text><text x="35" y="266" textLength="242" lengthAdjust="spacingAndGlyphs">源码网</text><text x="35" y="417" textLength="242" lengthAdjust="spacingAndGlyphs">源码网</text><text x="35" y="568" textLength="242" lengthAdjust="spacingAndGlyphs">源码网</text><text x="35" y="719" textLength="242" lengthAdjust="spacingAndGlyphs">源码网</text><text x="35" y="870" textLength="242" lengthAdjust="spacingAndGlyphs">源码网</text><text x="35" y="1021" textLength="242" lengthAdjust="spacingAndGlyphs">源码网</text><text x="35" y="1172" textLength="242" lengthAdjust="spacingAndGlyphs">源码网</text><text x="35" y="1323" textLength="242" lengthAdjust="spacingAndGlyphs">源码网</text></g></svg>
<svg class="abs" style="left:284px;top:45px;pointer-events:none" width="1409" height="1234" viewBox="284 45 1409 1234"><g font-family="DejaVu Sans,sans-serif" font-weight="bold" font-size="46.5" fill="#7d8c93" fill-opacity="0.12" stroke="#7d8c93" stroke-opacity="0.084" stroke-width="1"><text x="330.5" y="87" textLength="251" lengthAdjust="spacingAndGlyphs">AKA</text><text x="631.5" y="87" textLength="251" lengthAdjust="spacingAndGlyphs">AKA</text><text x="932.5" y="87" textLength="251" lengthAdjust="spacingAndGlyphs">AKA</text><text x="1233.5" y="87" textLength="251" lengthAdjust="spacingAndGlyphs">AKA</text><text x="1534.5" y="87" textLength="251" lengthAdjust="spacingAndGlyphs">AKA</text><text x="330.5" y="238" textLength="251" lengthAdjust="spacingAndGlyphs">AKA</text><text x="631.5" y="238" textLength="251" lengthAdjust="spacingAndGlyphs">AKA</text><text x="932.5" y="238" textLength="251" lengthAdjust="spacingAndGlyphs">AKA</text><text x="1233.5" y="238" textLength="251" lengthAdjust="spacingAndGlyphs">AKA</text><text x="1534.5" y="238" textLength="251" lengthAdjust="spacingAndGlyphs">AKA</text><text x="330.5" y="389" textLength="251" lengthAdjust="spacingAndGlyphs">AKA</text><text x="631.5" y="389" textLength="251" lengthAdjust="spacingAndGlyphs">AKA</text><text x="932.5" y="389" textLength="251" lengthAdjust="spacingAndGlyphs">AKA</text><text x="1233.5" y="389" textLength="251" lengthAdjust="spacingAndGlyphs">AKA</text><text x="1534.5" y="389" textLength="251" lengthAdjust="spacingAndGlyphs">AKA</text><text x="330.5" y="540" textLength="251" lengthAdjust="spacingAndGlyphs">AKA</text><text x="631.5" y="540" textLength="251" lengthAdjust="spacingAndGlyphs">AKA</text><text x="932.5" y="540" textLength="251" lengthAdjust="spacingAndGlyphs">AKA</text><text x="1233.5" y="540" textLength="251" lengthAdjust="spacingAndGlyphs">AKA</text><text x="1534.5" y="540" textLength="251" lengthAdjust="spacingAndGlyphs">AKA</text><text x="330.5" y="691" textLength="251" lengthAdjust="spacingAndGlyphs">AKA</text><text x="631.5" y="691" textLength="251" lengthAdjust="spacingAndGlyphs">AKA</text><text x="932.5" y="691" textLength="251" lengthAdjust="spacingAndGlyphs">AKA</text><text x="1233.5" y="691" textLength="251" lengthAdjust="spacingAndGlyphs">AKA</text><text x="1534.5" y="691" textLength="251" lengthAdjust="spacingAndGlyphs">AKA</text><text x="330.5" y="842" textLength="251" lengthAdjust="spacingAndGlyphs">AKA</text><text x="631.5" y="842" textLength="251" lengthAdjust="spacingAndGlyphs">AKA</text><text x="932.5" y="842" textLength="251" lengthAdjust="spacingAndGlyphs">AKA</text><text x="1233.5" y="842" textLength="251" lengthAdjust="spacingAndGlyphs">AKA</text><text x="1534.5" y="842" textLength="251" lengthAdjust="spacingAndGlyphs">AKA</text><text x="330.5" y="993" textLength="251" lengthAdjust="spacingAndGlyphs">AKA</text><text x="631.5" y="993" textLength="251" lengthAdjust="spacingAndGlyphs">AKA</text><text x="932.5" y="993" textLength="251" lengthAdjust="spacingAndGlyphs">AKA</text><text x="1233.5" y="993" textLength="251" lengthAdjust="spacingAndGlyphs">AKA</text><text x="1534.5" y="993" textLength="251" lengthAdjust="spacingAndGlyphs">AKA</text><text x="330.5" y="1144" textLength="251" lengthAdjust="spacingAndGlyphs">AKA</text><text x="631.5" y="1144" textLength="251" lengthAdjust="spacingAndGlyphs">AKA</text><text x="932.5" y="1144" textLength="251" lengthAdjust="spacingAndGlyphs">AKA</text><text x="1233.5" y="1144" textLength="251" lengthAdjust="spacingAndGlyphs">AKA</text><text x="1534.5" y="1144" textLength="251" lengthAdjust="spacingAndGlyphs">AKA</text><text x="330.5" y="1295" textLength="251" lengthAdjust="spacingAndGlyphs">AKA</text><text x="631.5" y="1295" textLength="251" lengthAdjust="spacingAndGlyphs">AKA</text><text x="932.5" y="1295" textLength="251" lengthAdjust="spacingAndGlyphs">AKA</text><text x="1233.5" y="1295" textLength="251" lengthAdjust="spacingAndGlyphs">AKA</text><text x="1534.5" y="1295" textLength="251" lengthAdjust="spacingAndGlyphs">AKA</text></g><g font-family="Noto Sans CJK SC,sans-serif" font-weight="900" font-size="32" fill="#e01828" fill-opacity="0.105"><text x="336" y="115" textLength="242" lengthAdjust="spacingAndGlyphs">源码网</text><text x="637" y="115" textLength="242" lengthAdjust="spacingAndGlyphs">源码网</text><text x="938" y="115" textLength="242" lengthAdjust="spacingAndGlyphs">源码网</text><text x="1239" y="115" textLength="242" lengthAdjust="spacingAndGlyphs">源码网</text><text x="1540" y="115" textLength="242" lengthAdjust="spacingAndGlyphs">源码网</text><text x="336" y="266" textLength="242" lengthAdjust="spacingAndGlyphs">源码网</text><text x="637" y="266" textLength="242" lengthAdjust="spacingAndGlyphs">源码网</text><text x="938" y="266" textLength="242" lengthAdjust="spacingAndGlyphs">源码网</text><text x="1239" y="266" textLength="242" lengthAdjust="spacingAndGlyphs">源码网</text><text x="1540" y="266" textLength="242" lengthAdjust="spacingAndGlyphs">源码网</text><text x="336" y="417" textLength="242" lengthAdjust="spacingAndGlyphs">源码网</text><text x="637" y="417" textLength="242" lengthAdjust="spacingAndGlyphs">源码网</text><text x="938" y="417" textLength="242" lengthAdjust="spacingAndGlyphs">源码网</text><text x="1239" y="417" textLength="242" lengthAdjust="spacingAndGlyphs">源码网</text><text x="1540" y="417" textLength="242" lengthAdjust="spacingAndGlyphs">源码网</text><text x="336" y="568" textLength="242" lengthAdjust="spacingAndGlyphs">源码网</text><text x="637" y="568" textLength="242" lengthAdjust="spacingAndGlyphs">源码网</text><text x="938" y="568" textLength="242" lengthAdjust="spacingAndGlyphs">源码网</text><text x="1239" y="568" textLength="242" lengthAdjust="spacingAndGlyphs">源码网</text><text x="1540" y="568" textLength="242" lengthAdjust="spacingAndGlyphs">源码网</text><text x="336" y="719" textLength="242" lengthAdjust="spacingAndGlyphs">源码网</text><text x="637" y="719" textLength="242" lengthAdjust="spacingAndGlyphs">源码网</text><text x="938" y="719" textLength="242" lengthAdjust="spacingAndGlyphs">源码网</text><text x="1239" y="719" textLength="242" lengthAdjust="spacingAndGlyphs">源码网</text><text x="1540" y="719" textLength="242" lengthAdjust="spacingAndGlyphs">源码网</text><text x="336" y="870" textLength="242" lengthAdjust="spacingAndGlyphs">源码网</text><text x="637" y="870" textLength="242" lengthAdjust="spacingAndGlyphs">源码网</text><text x="938" y="870" textLength="242" lengthAdjust="spacingAndGlyphs">源码网</text><text x="1239" y="870" textLength="242" lengthAdjust="spacingAndGlyphs">源码网</text><text x="1540" y="870" textLength="242" lengthAdjust="spacingAndGlyphs">源码网</text><text x="336" y="1021" textLength="242" lengthAdjust="spacingAndGlyphs">源码网</text><text x="637" y="1021" textLength="242" lengthAdjust="spacingAndGlyphs">源码网</text><text x="938" y="1021" textLength="242" lengthAdjust="spacingAndGlyphs">源码网</text><text x="1239" y="1021" textLength="242" lengthAdjust="spacingAndGlyphs">源码网</text><text x="1540" y="1021" textLength="242" lengthAdjust="spacingAndGlyphs">源码网</text><text x="336" y="1172" textLength="242" lengthAdjust="spacingAndGlyphs">源码网</text><text x="637" y="1172" textLength="242" lengthAdjust="spacingAndGlyphs">源码网</text><text x="938" y="1172" textLength="242" lengthAdjust="spacingAndGlyphs">源码网</text><text x="1239" y="1172" textLength="242" lengthAdjust="spacingAndGlyphs">源码网</text><text x="1540" y="1172" textLength="242" lengthAdjust="spacingAndGlyphs">源码网</text><text x="336" y="1323" textLength="242" lengthAdjust="spacingAndGlyphs">源码网</text><text x="637" y="1323" textLength="242" lengthAdjust="spacingAndGlyphs">源码网</text><text x="938" y="1323" textLength="242" lengthAdjust="spacingAndGlyphs">源码网</text><text x="1239" y="1323" textLength="242" lengthAdjust="spacingAndGlyphs">源码网</text><text x="1540" y="1323" textLength="242" lengthAdjust="spacingAndGlyphs">源码网</text></g></svg>
</body></html>
